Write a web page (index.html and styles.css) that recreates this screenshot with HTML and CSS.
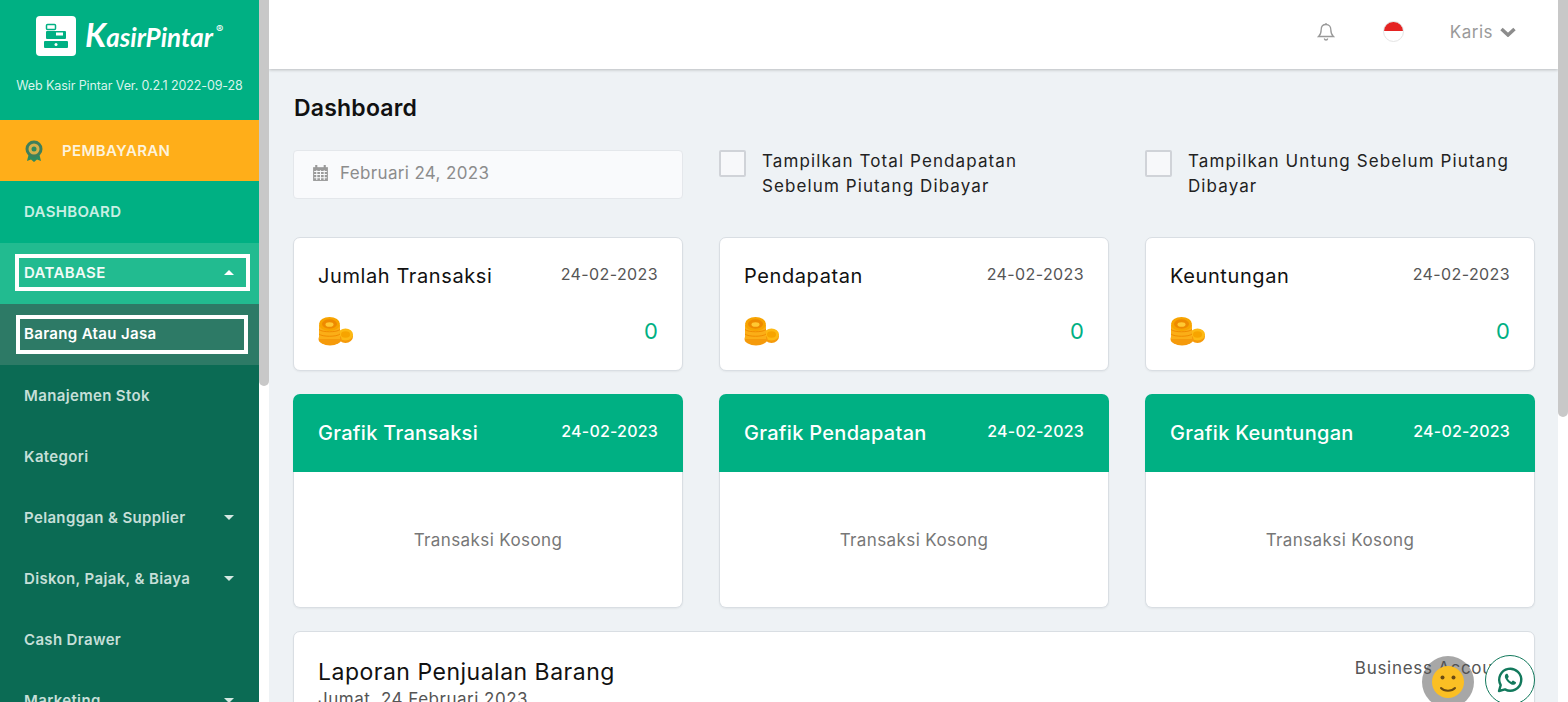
FILE: index.html
```html
<!DOCTYPE html>
<html lang="en">
<head>
    <meta charset="UTF-8">
    <title>Kasir Pintar Dashboard</title>
    <link rel="stylesheet" href="styles.css">
</head>
<body>
    <aside class="sidebar">
        <div class="brand">
            <div class="logo-row">
                <div class="logo-box">
                    <svg width="32" height="32" viewBox="0 0 32 32">
                        <rect x="6.500" y="4.500" width="9" height="5" rx="1" fill="none" stroke="#00b083" stroke-width="1.500"/>
                        <rect x="6" y="11" width="20" height="8" rx="1" fill="#00b083"/>
                        <rect x="16" y="12.500" width="7" height="3" fill="#fff"/>
                        <rect x="4" y="21" width="24" height="7" rx="1" fill="#00b083"/>
                        <circle cx="16" cy="24.500" r="1.500" fill="#fff"/>
                    </svg>
                </div>
                <span class="logo-text"><span class="logo-k">K</span>asirPintar</span><sup class="logo-reg">®</sup>
            </div>
            <div class="version">Web Kasir Pintar Ver. 0.2.1 2022-09-28</div>
        </div>
        <div class="nav-item pay">
            <svg width="20" height="24" viewBox="0 0 20 24">
                <path d="M5 14l-2 8 4-1.500 3 2.500 3-2.500 4 1.500-2-8z" fill="#2f8a5f"/>
                <circle cx="10" cy="10" r="8.500" fill="#3f7f5a"/>
                <circle cx="10" cy="10" r="5.500" fill="#d7b04a"/>
                <circle cx="10" cy="10" r="2.500" fill="#2f8a5f"/>
            </svg>
            <span>PEMBAYARAN</span>
        </div>
        <div class="nav-item top">DASHBOARD</div>
        <div class="nav-item open">
            <div class="focus-box">DATABASE <i class="caret up"></i></div>
        </div>
        <div class="nav-item current">
            <div class="focus-box">Barang Atau Jasa</div>
        </div>
        <div class="nav-item sub">Manajemen Stok</div>
        <div class="nav-item sub">Kategori</div>
        <div class="nav-item sub">Pelanggan &amp; Supplier <i class="caret"></i></div>
        <div class="nav-item sub">Diskon, Pajak, &amp; Biaya <i class="caret"></i></div>
        <div class="nav-item sub">Cash Drawer</div>
        <div class="nav-item sub">Marketing <i class="caret"></i></div>
    </aside>
    <div class="scrollbar side-scroll"><div class="thumb"></div></div>

    <div class="main">
        <header class="topbar">
            <svg class="bell" width="18" height="20" viewBox="0 0 18 20" fill="none" stroke="#999" stroke-width="1.300">
                <path d="M9 2.500c-3 0-4.800 2.200-4.800 5 0 4-1 5.500-2.600 7h14.800c-1.600-1.500-2.600-3-2.600-7 0-2.800-1.800-5-4.800-5z"/>
                <path d="M9 1v1.500M7.300 16.500c.2 1 .8 1.500 1.700 1.500s1.500-.5 1.700-1.500"/>
            </svg>
            <div class="flag"></div>
            <div class="user">Karis
                <svg width="16" height="11" viewBox="0 0 16 11"><path d="M1.500 3l6.500 6 6.500-6" fill="none" stroke="#8c8c8c" stroke-width="3.500"/></svg>
            </div>
        </header>

        <div class="content">
            <h1>Dashboard</h1>
            <div class="grid filters">
                <div class="date-input">
                    <svg width="17" height="18" viewBox="0 0 16 17">
                        <path d="M1 3h14v13H1z" fill="#9a9a9a"/>
                        <path d="M4 1v3M12 1v3" stroke="#9a9a9a" stroke-width="2"/>
                        <path d="M2 7h12M2 10h12M2 13h12M4.500 6v9M8 6v9M11.500 6v9" stroke="#f9fafc" stroke-width="1"/>
                    </svg>
                    <span>Februari 24, 2023</span>
                </div>
                <label class="check"><span class="box"></span><span class="check-text">Tampilkan Total Pendapatan Sebelum Piutang Dibayar</span></label>
                <label class="check"><span class="box"></span><span class="check-text">Tampilkan Untung Sebelum Piutang Dibayar</span></label>
            </div>

            <div class="grid cards">
                <div class="card stat">
                    <div class="row"><h3>Jumlah Transaksi</h3><span class="date">24-02-2023</span></div>
                    <div class="row low"><svg class="coins" width="36" height="30"><use href="#coins"/></svg><span class="num">0</span></div>
                </div>
                <div class="card stat">
                    <div class="row"><h3>Pendapatan</h3><span class="date">24-02-2023</span></div>
                    <div class="row low"><svg class="coins" width="36" height="30"><use href="#coins"/></svg><span class="num">0</span></div>
                </div>
                <div class="card stat">
                    <div class="row"><h3>Keuntungan</h3><span class="date">24-02-2023</span></div>
                    <div class="row low"><svg class="coins" width="36" height="30"><use href="#coins"/></svg><span class="num">0</span></div>
                </div>

                <div class="chart">
                    <div class="chart-head"><h3>Grafik Transaksi</h3><span class="date">24-02-2023</span></div>
                    <div class="chart-body">Transaksi Kosong</div>
                </div>
                <div class="chart">
                    <div class="chart-head"><h3>Grafik Pendapatan</h3><span class="date">24-02-2023</span></div>
                    <div class="chart-body">Transaksi Kosong</div>
                </div>
                <div class="chart">
                    <div class="chart-head"><h3>Grafik Keuntungan</h3><span class="date">24-02-2023</span></div>
                    <div class="chart-body">Transaksi Kosong</div>
                </div>

                <div class="card report">
                    <div>
                        <h2>Laporan Penjualan Barang</h2>
                        <div class="report-date">Jumat, 24 Februari 2023</div>
                    </div>
                    <div class="account">Business Account</div>
                </div>
            </div>
        </div>
    </div>
    <div class="scrollbar main-scroll"><div class="thumb"></div></div>

    <div class="smile">
        <svg width="32" height="32" viewBox="0 0 32 32">
            <circle cx="16" cy="16" r="16" fill="#fbbf24"/>
            <circle cx="10.500" cy="11.500" r="2" fill="#6b4a12"/>
            <circle cx="21.500" cy="11.500" r="2" fill="#6b4a12"/>
            <path d="M9 22c3 3.500 11 3.500 14 0" fill="none" stroke="#6b4a12" stroke-width="2" stroke-linecap="round"/>
        </svg>
    </div>
    <div class="wa">
        <svg width="28" height="28" viewBox="0 0 28 28">
            <path d="M3 25l1.700-5.800A11 11 0 1 1 9 23.400z" fill="none" stroke="#12795c" stroke-width="2.400" stroke-linejoin="round"/>
            <path d="M10 8c-1.300 1-1.500 2.700-.6 4.600 1.200 2.500 3.500 4.800 6 5.800 1.800.7 3.500.3 4.400-1 .4-.6.300-1.200-.2-1.500l-2.200-1.200c-.5-.2-.9 0-1.200.4l-.7.8c-1.700-.7-3-2-3.800-3.700l.7-.8c.4-.4.4-.8.200-1.200l-1-2.100c-.3-.5-.9-.6-1.600-.1z" fill="#12795c"/>
        </svg>
    </div>

    <svg width="0" height="0" class="defs">
        <defs>
            <g id="coins">
                <ellipse cx="27.500" cy="20.500" rx="7.500" ry="6.500" fill="#f59a0b"/>
                <ellipse cx="27.500" cy="18.500" rx="7.500" ry="6" fill="#fdb913"/>
                <ellipse cx="27.500" cy="18.500" rx="4.500" ry="3.200" fill="#f7a400"/>
                <ellipse cx="12" cy="23" rx="11.500" ry="6.500" fill="#f59a0b"/>
                <rect x="1" y="9" width="21" height="14" fill="#fbae17"/>
                <path d="M1 13.500c3 3 18 3 21 0M1 18c3 3 18 3 21 0" stroke="#f08c00" stroke-width="1" fill="none"/>
                <ellipse cx="11.500" cy="8" rx="10.500" ry="7" fill="#f7a400"/>
                <ellipse cx="11.500" cy="8" rx="7.500" ry="4.700" fill="#ee8a00"/>
                <ellipse cx="11.500" cy="8.500" rx="4" ry="2.300" fill="#ffc933"/>
            </g>
        </defs>
    </svg>
</body>
</html>
```

FILE: styles.css
```css
* {
    box-sizing: border-box;
}

html, body {
    margin: 0;
    height: 702px;
    overflow: hidden;
}

body {
    display: flex;
    font-family: 'Inter', 'Liberation Sans', sans-serif;
    background-color: #eef2f5;
    color: #111;
}

h1, h2, h3 {
    margin: 0;
    font-weight: 500;
}

/* sidebar */
.sidebar {
    width: 259px;
    flex: none;
    height: 702px;
    overflow: hidden;
    background-color: #0b6b54;
}

.brand {
    height: 120px;
    padding-top: 16px;
    background-color: #00b083;
    color: #fff;
}

.logo-row {
    display: flex;
    align-items: center;
    padding-left: 36px;
    height: 40px;
}

.logo-box {
    width: 40px;
    height: 40px;
    background-color: #fff;
    border-radius: 4px;
    display: flex;
    align-items: center;
    justify-content: center;
    margin-right: 9px;
}

.logo-text {
    font-family: 'Lato', sans-serif;
    font-style: italic;
    font-weight: 700;
    font-size: 26px;
}

.logo-k {
    font-size: 33px;
    line-height: 30px;
}

.logo-reg {
    font-size: 11px;
    align-self: flex-start;
    margin: 6px 0 0 3px;
}

.version {
    margin-top: 22px;
    text-align: center;
    font-size: 12.5px;
    letter-spacing: -0.1px;
    white-space: nowrap;
    color: #d9f4ec;
}

.nav-item {
    height: 61px;
    display: flex;
    align-items: center;
    padding: 0 24px;
    font-size: 15px;
    font-weight: 600;
    letter-spacing: 0.35px;
}

.caret {
    margin-left: auto;
    margin-right: 1px;
    border-left: 5px solid transparent;
    border-right: 5px solid transparent;
    border-top: 5px solid #d5e8e2;
}

.caret.up {
    border-top: 0;
    border-bottom: 5px solid #fff;
    margin-right: 12px;
}

.pay {
    background-color: #ffae19;
    color: #fdf3dc;
    gap: 18px;
}

.top {
    height: 62px;
    padding-bottom: 2px;
    background-color: #00b083;
    color: #c9efe4;
}

.open {
    padding: 0 9px 2px 15px;
    background-color: #22bb90;
    color: #f2fbf8;
}

.current {
    padding: 0 11px 0 16px;
    background-color: #2d7a66;
    color: #fff;
}

.focus-box {
    flex: 1;
    display: flex;
    align-items: center;
    height: 37px;
    padding-left: 5px;
    border: 4px solid #fff;
}

.current .focus-box {
    height: 39px;
    padding: 0 0 2px 4px;
}

.sub {
    color: #c6dfd8;
}

/* scrollbars */
.scrollbar {
    width: 10px;
    flex: none;
    height: 702px;
    background-color: #fff;
}

.thumb {
    background-color: #c8c8c8;
    border-radius: 0 0 5px 5px;
}

.side-scroll .thumb {
    height: 386px;
}

.main-scroll .thumb {
    height: 417px;
}

/* main */
.main {
    flex: 1;
    min-width: 0;
    height: 702px;
    overflow: hidden;
}

.topbar {
    height: 69px;
    display: flex;
    align-items: center;
    justify-content: flex-end;
    padding-right: 42px;
    background-color: #fff;
    box-shadow: 0 1px 3px rgba(0, 0, 0, 0.22);
    position: relative;
}

.bell {
    margin: 0 48px 6px 0;
}

.flag {
    width: 21px;
    height: 21px;
    margin: 0 46px 6px 0;
    border-radius: 50%;
    border: 1px solid #e4e4e4;
    background: linear-gradient(#e52322 50%, #fff 50%);
}

.user {
    display: flex;
    align-items: center;
    gap: 7px;
    margin-bottom: 6px;
    font-size: 17px;
    letter-spacing: 0.5px;
    color: #9a9a9a;
}

.content {
    padding: 26px 23px 0 24px;
}

.content h1 {
    font-size: 23px;
    font-weight: 600;
    letter-spacing: 0.2px;
    line-height: 27px;
    padding-left: 1px;
    color: #111;
}

.grid {
    display: grid;
    grid-template-columns: repeat(3, 390px);
    column-gap: 36px;
}

.filters {
    height: 87px;
    margin-top: 28px;
}

.date-input {
    height: 49px;
    display: flex;
    align-items: center;
    gap: 11px;
    padding: 0 0 3px 18px;
    background-color: #f9fafc;
    border: 1px solid #e4e7eb;
    border-radius: 4px;
    font-size: 17px;
    letter-spacing: 0.35px;
    color: #8c8c8c;
}

.check {
    display: flex;
    align-items: flex-start;
    gap: 16px;
    font-size: 17px;
    letter-spacing: 1.1px;
    line-height: 25px;
    color: #222;
}

.check-text {
    max-width: 326px;
    margin-top: -1px;
}

.box {
    width: 27px;
    height: 27px;
    flex: none;
    border: 2px solid #d0d3d8;
    border-radius: 2px;
    background-color: #f7f8fa;
}

.cards {
    row-gap: 23px;
}

.card {
    background-color: #fff;
    border: 1px solid #d9dee3;
    border-radius: 7px;
    box-shadow: 0 1px 2px rgba(0, 0, 0, 0.05);
}

.stat {
    height: 134px;
    padding: 24px 24px 0;
}

.row {
    display: flex;
    justify-content: space-between;
    align-items: flex-start;
}

.row h3 {
    font-size: 20px;
    font-weight: 400;
    letter-spacing: 0.6px;
    line-height: 28px;
    color: #111;
}

.date {
    font-size: 16px;
    letter-spacing: 0.4px;
    line-height: 24px;
    color: #555;
}

.low {
    margin-top: 26px;
    align-items: center;
}

.num {
    font-size: 22px;
    color: #00b083;
}

.coins {
    display: block;
}

.defs {
    position: absolute;
}

.chart {
    height: 214px;
    border-radius: 7px;
    box-shadow: 0 1px 2px rgba(0, 0, 0, 0.05);
}

.chart-head {
    height: 78px;
    padding: 25px 25px 0;
    display: flex;
    justify-content: space-between;
    align-items: flex-start;
    background-color: #00b083;
    border-radius: 7px 7px 0 0;
    color: #fff;
}

.chart-head h3 {
    font-size: 20px;
    letter-spacing: 0.3px;
    line-height: 28px;
}

.chart-head .date {
    color: #fff;
    font-weight: 500;
    letter-spacing: 0.2px;
}

.chart-body {
    height: 136px;
    display: flex;
    align-items: center;
    justify-content: center;
    background-color: #fff;
    border: 1px solid #d9dee3;
    border-top: 0;
    border-radius: 0 0 7px 7px;
    font-size: 17px;
    letter-spacing: 0.4px;
    color: #777;
}

.report {
    grid-column: 1 / -1;
    height: 120px;
    padding: 24px 24px 0;
    display: flex;
    justify-content: space-between;
    align-items: flex-start;
}

.report h2 {
    font-size: 23px;
    font-weight: 400;
    letter-spacing: 0.5px;
    line-height: 32px;
}

.report-date {
    margin-top: 1px;
    font-size: 17px;
    letter-spacing: 0.5px;
    color: #555;
}

.account {
    font-size: 17px;
    letter-spacing: 0.7px;
    line-height: 24px;
    color: #555;
}

/* floating buttons */
.smile {
    position: absolute;
    left: 1422px;
    top: 656px;
    width: 52px;
    height: 52px;
    border-radius: 50%;
    background-color: rgba(80, 80, 80, 0.5);
    display: flex;
    align-items: center;
    justify-content: center;
}

.wa {
    position: absolute;
    left: 1485px;
    top: 655px;
    width: 50px;
    height: 50px;
    border-radius: 50%;
    border: 1px solid #12795c;
    background-color: #fff;
    display: flex;
    align-items: center;
    justify-content: center;
}
```
